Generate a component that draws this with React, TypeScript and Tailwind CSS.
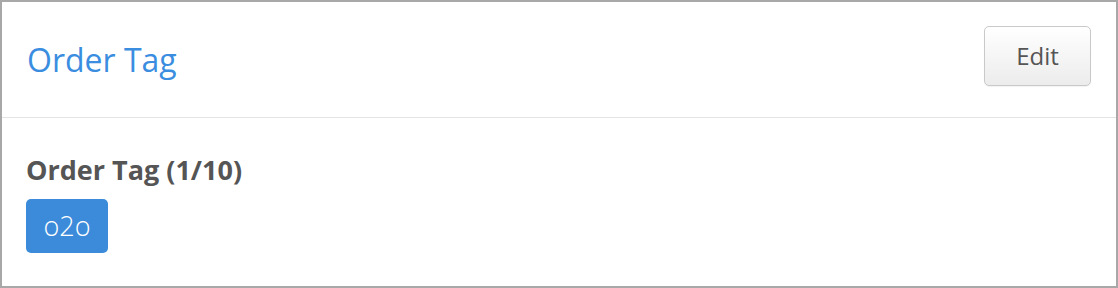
export default function App() {
  return (
    <div className="w-[1118px] h-[288px] bg-white border-2 border-[#a8a8a8] font-['Open_Sans',sans-serif]">
      <div className="flex items-start justify-between h-[116px] pt-[24px] px-[25px] border-b border-[#e4e4e4]">
        <h2 className="mt-[12px] text-[32px] leading-[44px] text-[#3a8ddf]">Order Tag</h2>
        <button className="w-[107px] h-[60px] rounded-[5px] border border-[#c9c9c9] bg-gradient-to-b from-white to-[#ececec] text-[24px] text-[#555] shadow-[0_1px_1px_rgba(0,0,0,0.05)]">
          Edit
        </button>
      </div>
      <div className="pl-[24px] pr-[25px] pt-[33px]">
        <div className="text-[27px] leading-[37px] font-bold text-[#555]">Order Tag (1/10)</div>
        <div className="mt-[11px] flex">
          <span className="flex items-center justify-center w-[82px] h-[54px] rounded-[5px] bg-[#3b8bda] text-[27px] font-light text-white">
            o2o
          </span>
        </div>
      </div>
    </div>
  )
}
